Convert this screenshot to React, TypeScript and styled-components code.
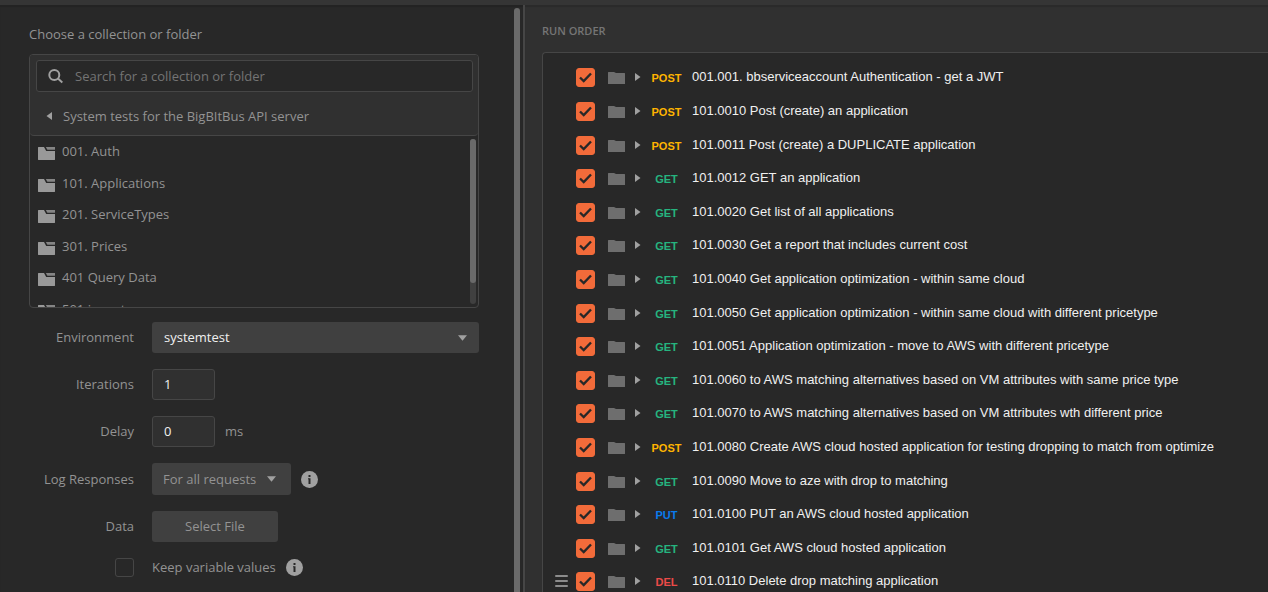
import React from "react";
import styled, { createGlobalStyle } from "styled-components";

const c = {
  page: "#282828",
  panel: "#303030",
  bar: "#353535",
  border: "#464646",
  control: "#404040",
  text: "#939393",
  dim: "#747474",
  bright: "#f0f0f0",
  thumb: "#6a6a6a",
  accent: "#f26b3a",
};

const sans = '"Open Sans", "Noto Sans", sans-serif';

const GlobalStyle = createGlobalStyle`
  *, *::before, *::after { box-sizing: border-box; }
  body {
    margin: 0;
    background: ${c.page};
    color: ${c.text};
    font: 13px/20px ${sans};
    overflow: hidden;
  }
  input, select, button { font: inherit; margin: 0; }
`;

const Shell = styled.div`
  display: flex;
  flex-direction: column;
  height: 100vh;
`;

const TopBar = styled.header`
  flex: none;
  height: 5px;
  background: ${c.bar};
`;

const Columns = styled.main`
  flex: 1;
  min-height: 0;
  display: grid;
  grid-template-columns: minmax(523px, 41%) minmax(0, 1fr);
`;

const SetupPane = styled.section`
  display: flex;
  min-height: 0;
  padding: 0 3px 0 29px;
  box-shadow: inset 0 2px 1px rgba(0, 0, 0, 0.12);
`;

const SetupContent = styled.div`
  flex: 1;
  min-width: 0;
  padding-top: 19px;
`;

const PaneScrollbar = styled.div`
  flex: none;
  width: 6px;
  margin: 3px 0 0 35px;
  border-radius: 3px 3px 0 0;
  background: ${c.thumb};
`;

const Heading = styled.h2`
  margin: 0 0 10px;
  font-size: 13px;
  font-weight: 400;
`;

const Picker = styled.div`
  height: 254px;
  display: flex;
  flex-direction: column;
  border: 1px solid ${c.border};
  border-radius: 4px;
  overflow: hidden;
`;

const PickerHead = styled.div`
  flex: none;
  padding: 5px 5px 0 6px;
  background: ${c.panel};
  border-bottom: 1px solid ${c.border};
  border-radius: 0 0 4px 4px;
`;

const SearchBox = styled.label`
  display: flex;
  align-items: center;
  gap: 11px;
  height: 32px;
  padding: 0 11px;
  border: 1px solid ${c.border};
  border-radius: 3px;
  background: ${c.page};
`;

const SearchInput = styled.input`
  flex: 1;
  min-width: 0;
  padding: 0;
  border: 0;
  outline: 0;
  background: transparent;
  color: ${c.bright};
  &::placeholder { color: ${c.dim}; opacity: 1; }
`;

const BackButton = styled.button`
  display: flex;
  align-items: center;
  gap: 11px;
  width: 100%;
  height: 43px;
  padding: 4px 0 0 10px;
  border: 0;
  background: transparent;
  color: ${c.text};
  text-align: left;
`;

const FolderArea = styled.div`
  flex: 1;
  min-height: 0;
  display: flex;
  justify-content: space-between;
  padding: 3px 2px 3px 8px;
`;

const FolderViewport = styled.div`
  flex: 1;
  min-width: 0;
  margin-bottom: -3px;
  overflow: hidden;
`;

const FolderList = styled.ul`
  display: grid;
  grid-auto-rows: 32px 31px;
  margin: 0;
  padding: 2px 0 0;
  list-style: none;
`;

const FolderItem = styled.li`
  display: flex;
  align-items: flex-start;
  gap: 7px;
  svg { margin-top: 6px; }
`;

const ListTrack = styled.div`
  flex: none;
  width: 6px;
  border-radius: 3px;
  background: ${c.control};
`;

const ListThumb = styled.div`
  height: 87%;
  border-radius: 3px;
  background: ${c.thumb};
`;

const Form = styled.form`
  display: grid;
  grid-template-columns: 105px minmax(0, 1fr);
  column-gap: 18px;
  row-gap: 16px;
  align-items: center;
  margin-top: 14px;
  line-height: 19px;
`;

const FieldLabel = styled.label`
  text-align: right;
`;

const Field = styled.div`
  display: flex;
  align-items: center;
  gap: 10px;
`;

const NumberInput = styled.input`
  width: 63px;
  height: 31px;
  padding: 0 11px 1px;
  border: 1px solid ${c.border};
  border-radius: 3px;
  background: ${c.panel};
  color: ${c.bright};
`;

const SelectWrap = styled.div<{ $wide?: boolean }>`
  display: grid;
  align-items: center;
  width: ${(p) => (p.$wide ? "100%" : "139px")};
  > * { grid-area: 1 / 1; }
  > svg {
    justify-self: end;
    margin-right: ${(p) => (p.$wide ? "12px" : "15px")};
    pointer-events: none;
  }
`;

const Select = styled.select<{ $wide?: boolean }>`
  appearance: none;
  width: 100%;
  height: ${(p) => (p.$wide ? "31px" : "32px")};
  padding: ${(p) => (p.$wide ? "0 12px 1px" : "0 11px")};
  border: 0;
  border-radius: 3px;
  background: ${c.control};
  color: ${(p) => (p.$wide ? c.bright : c.text)};
`;

const FileButton = styled.button`
  width: 126px;
  height: 31px;
  padding: 0;
  border: 0;
  border-radius: 3px;
  background: ${c.control};
  color: ${c.text};
`;

const TickWrap = styled.span`
  display: grid;
  place-items: center;
  width: 19px;
  height: 19px;
  justify-self: end;
  > * { grid-area: 1 / 1; }
  > svg { pointer-events: none; }
`;

const Tick = styled.input`
  appearance: none;
  width: 19px;
  height: 19px;
  border: 1px solid ${c.border};
  border-radius: 3px;
  &:checked {
    border-color: ${c.accent};
    background: ${c.accent};
  }
  & + svg { visibility: hidden; }
  &:checked + svg { visibility: visible; }
`;

const RunPane = styled.section`
  display: flex;
  flex-direction: column;
  min-height: 0;
  padding: 16px 0 0 17px;
  border-left: 2px solid ${c.border};
  background: ${c.panel};
  box-shadow: inset 0 2px 1px rgba(0, 0, 0, 0.12);
`;

const RunHeading = styled.h2`
  flex: none;
  margin: 0 0 11px;
  color: #757575;
  font-size: 11px;
  font-weight: 600;
  line-height: 20px;
`;

const RunBox = styled.div`
  flex: 1;
  min-height: 0;
  padding: 14px 0 0 12px;
  border: 1px solid ${c.border};
  border-width: 1px 0 0 1px;
  border-radius: 4px 0 0 0;
  background: ${c.page};
  overflow: hidden;
`;

const RunList = styled.ol`
  display: grid;
  grid-auto-rows: 34px 34px 33px 34px 33px;
  margin: 0;
  padding: 0;
  list-style: none;
  font-family: "Liberation Sans", Arial, sans-serif;
`;

const RunItem = styled.li`
  display: grid;
  grid-template-columns: 13px 20px 17px 6px 31px minmax(0, 1fr);
  column-gap: 10px;
  align-items: center;
  align-self: start;
  height: 19px;
  white-space: nowrap;
  > :nth-child(2) { justify-self: start; margin-left: -2px; }
`;

const Handle = styled.span`
  display: grid;
  gap: 3px;
  padding-bottom: 2px;
  > i { height: 2px; border-radius: 1px; background: #8c8c8c; }
`;

const Method = styled.span<{ $color: string }>`
  display: flex;
  justify-content: center;
  padding-top: 2px;
  color: ${(p) => p.$color};
  font-size: 11px;
  font-weight: 700;
  line-height: 19px;
`;

const RequestName = styled.label`
  color: ${c.bright};
  line-height: 20px;
  align-self: start;
`;

const CaretDown = () => (
  <svg width="9" height="6" viewBox="0 0 9 6" aria-hidden="true">
    <path d="M0 .3H9L4.500 5.800Z" fill="#a0a0a0" />
  </svg>
);

const CaretRight = () => (
  <svg width="6" height="9" viewBox="0 0 6 9" aria-hidden="true">
    <path d="M0 0V8L5.500 4Z" fill="#a0a0a0" />
  </svg>
);

const CaretLeft = () => (
  <svg width="6" height="8" viewBox="0 0 6 8" aria-hidden="true">
    <path d="M6 0V8L.5 4Z" fill="#a0a0a0" />
  </svg>
);

const SearchIcon = () => (
  <svg width="16" height="16" viewBox="0 0 16 16" fill="none" stroke="#a0a0a0" strokeWidth="2" aria-hidden="true">
    <circle cx="6.300" cy="6.900" r="5" />
    <path d="M10 10.600L14.300 14.400" />
  </svg>
);

const OpenFolderIcon = () => (
  <svg width="17" height="13" viewBox="0 0 17 13" fill="#999999" aria-hidden="true">
    <path d="M0 .4Q0 0 .4 0H6L8.200 4H17V12.600Q17 13 16.600 13H.4Q0 13 0 12.600Z" />
    <path d="M7.800 0H17V2.700H9.400Z" fill="#858585" />
  </svg>
);

const FolderIcon = () => (
  <svg width="17" height="13" viewBox="0 0 17 13" fill="#6e6e6e" aria-hidden="true">
    <path d="M0 1.500Q0 1 .5 1H6L8 2H16.500Q17 2 17 2.500V12.500Q17 13 16.500 13H.5Q0 13 0 12.500Z" />
  </svg>
);

const InfoIcon = () => (
  <svg width="17" height="17" viewBox="0 0 17 17" role="img" aria-label="More information">
    <circle cx="8.500" cy="8.500" r="8.500" fill="#a0a0a0" />
    <path d="M7.500 4h2v2h-2zM7 7.200h2.500V13h-2V8.200H7z" fill={c.page} />
  </svg>
);

const CheckIcon = () => (
  <svg width="13" height="11" viewBox="0 0 13 11" fill="none" stroke={c.page} strokeWidth="2.400" aria-hidden="true">
    <path d="M1 5.500L4.700 9L12 1.500" />
  </svg>
);

const methodColors: Record<string, string> = {
  POST: "#ffb400",
  GET: "#26b47f",
  PUT: "#097bed",
  DEL: "#ed4b48",
};

const folders = [
  "001. Auth",
  "101. Applications",
  "201. ServiceTypes",
  "301. Prices",
  "401 Query Data",
  "501 inventory",
];

const requests: [string, string][] = [
  ["POST", "001.001. bbserviceaccount Authentication - get a JWT"],
  ["POST", "101.0010 Post (create) an application"],
  ["POST", "101.0011 Post (create) a DUPLICATE application"],
  ["GET", "101.0012 GET an application"],
  ["GET", "101.0020 Get list of all applications"],
  ["GET", "101.0030 Get a report that includes current cost"],
  ["GET", "101.0040 Get application optimization - within same cloud"],
  ["GET", "101.0050 Get application optimization - within same cloud with different pricetype"],
  ["GET", "101.0051 Application optimization - move to AWS with different pricetype"],
  ["GET", "101.0060 to AWS matching alternatives based on VM attributes with same price type"],
  ["GET", "101.0070 to AWS matching alternatives based on VM attributes wth different price"],
  ["POST", "101.0080 Create AWS cloud hosted application for testing dropping to match from optimize"],
  ["GET", "101.0090 Move to aze with drop to matching"],
  ["PUT", "101.0100 PUT an AWS cloud hosted application"],
  ["GET", "101.0101 Get AWS cloud hosted application"],
  ["DEL", "101.0110 Delete drop matching application"],
];

const hovered = requests.length - 1;

export default function App() {
  return (
    <Shell>
      <GlobalStyle />
      <TopBar />
      <Columns>
        <SetupPane>
          <SetupContent>
            <Heading>Choose a collection or folder</Heading>
            <Picker>
              <PickerHead>
                <SearchBox>
                  <SearchIcon />
                  <SearchInput type="text" aria-label="Search" placeholder="Search for a collection or folder" />
                </SearchBox>
                <BackButton type="button">
                  <CaretLeft />
                  System tests for the BigBItBus API server
                </BackButton>
              </PickerHead>
              <FolderArea>
                <FolderViewport>
                  <FolderList>
                    {folders.map((name) => (
                      <FolderItem key={name}>
                        <OpenFolderIcon />
                        {name}
                      </FolderItem>
                    ))}
                  </FolderList>
                </FolderViewport>
                <ListTrack>
                  <ListThumb />
                </ListTrack>
              </FolderArea>
            </Picker>

            <Form>
              <FieldLabel htmlFor="environment">Environment</FieldLabel>
              <SelectWrap $wide>
                <Select $wide id="environment">
                  <option>systemtest</option>
                </Select>
                <CaretDown />
              </SelectWrap>

              <FieldLabel htmlFor="iterations">Iterations</FieldLabel>
              <NumberInput id="iterations" type="text" defaultValue="1" />

              <FieldLabel htmlFor="delay">Delay</FieldLabel>
              <Field>
                <NumberInput id="delay" type="text" defaultValue="0" />
                ms
              </Field>

              <FieldLabel htmlFor="log">Log Responses</FieldLabel>
              <Field>
                <SelectWrap>
                  <Select id="log">
                    <option>For all requests</option>
                  </Select>
                  <CaretDown />
                </SelectWrap>
                <InfoIcon />
              </Field>

              <FieldLabel htmlFor="data">Data</FieldLabel>
              <FileButton id="data" type="button">Select File</FileButton>

              <TickWrap>
                <Tick id="keep" type="checkbox" />
                <CheckIcon />
              </TickWrap>
              <Field>
                <label htmlFor="keep">Keep variable values</label>
                <InfoIcon />
              </Field>
            </Form>
          </SetupContent>
          <PaneScrollbar />
        </SetupPane>

        <RunPane>
          <RunHeading>RUN ORDER</RunHeading>
          <RunBox>
            <RunList>
              {requests.map(([method, name], i) => (
                <RunItem key={name}>
                  <Handle>{i === hovered && <><i /><i /><i /></>}</Handle>
                  <TickWrap>
                    <Tick id={`request-${i}`} type="checkbox" defaultChecked />
                    <CheckIcon />
                  </TickWrap>
                  <FolderIcon />
                  <CaretRight />
                  <Method $color={methodColors[method]}>{method}</Method>
                  <RequestName htmlFor={`request-${i}`}>{name}</RequestName>
                </RunItem>
              ))}
            </RunList>
          </RunBox>
        </RunPane>
      </Columns>
    </Shell>
  );
}
